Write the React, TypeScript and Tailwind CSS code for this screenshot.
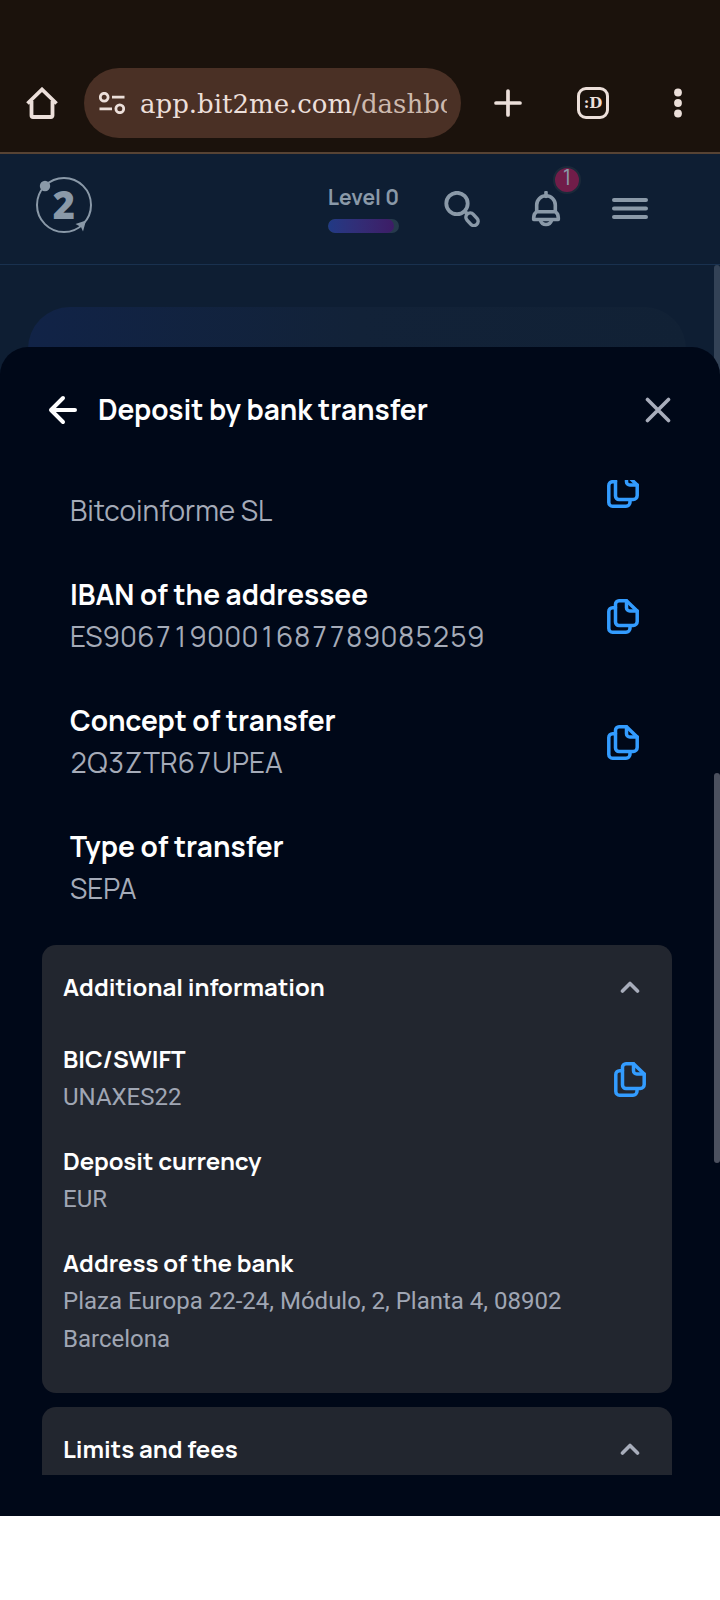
import React from "react";

type Detail = { title?: string; value: string; copy?: boolean };

const transferDetails: Detail[] = [
  { value: "Bitcoinforme SL", copy: true },
  { title: "IBAN of the addressee", value: "ES9067190001687789085259", copy: true },
  { title: "Concept of transfer", value: "2Q3ZTR67UPEA", copy: true },
  { title: "Type of transfer", value: "SEPA" },
];

const bankDetails: Detail[] = [
  { title: "BIC/SWIFT", value: "UNAXES22", copy: true },
  { title: "Deposit currency", value: "EUR" },
  { title: "Address of the bank", value: "Plaza Europa 22-24, Módulo, 2, Planta 4, 08902 Barcelona" },
];

function CopyButton({ label }: { label: string }) {
  return (
    <button type="button" aria-label={label} className="flex h-[42px] w-[42px] shrink-0 items-center justify-center text-[#339cff]">
      <svg width="32" height="35" viewBox="0 0 32 35" fill="none" stroke="currentColor" strokeWidth="3.5" strokeLinecap="round" strokeLinejoin="round">
        <path d="M12 1.8h7.5L30.2 12v10.5a4 4 0 0 1-4 4H12a3.5 3.5 0 0 1-3.500-3.500V5.300A3.500 3.500 0 0 1 12 1.800Z" />
        <path d="M19.500 1.800v7a3.300 3.300 0 0 0 3.300 3.300h7.400" />
        <path d="M8.500 8.700H5.600A3.800 3.800 0 0 0 1.800 12.500v17a3.700 3.700 0 0 0 3.700 3.700h13.500a4 4 0 0 0 4-4v-2.500" />
      </svg>
    </button>
  );
}

function BrowserBar() {
  return (
    <div className="shrink-0 border-b-2 border-[#574334] bg-[#1b120c] pt-[54px] text-[#ecdfda]">
      <div className="flex h-[98px] items-center px-[21px]">
        <button type="button" aria-label="Home" className="mr-[21px] flex h-[42px] w-[42px] shrink-0 items-center justify-center">
          <svg width="32" height="32" viewBox="0 0 32 32" fill="none" stroke="currentColor" strokeWidth="3.800" strokeLinejoin="round">
            <path d="M5.500 14v14.500a1.500 1.500 0 0 0 1.500 1.500h18a1.500 1.500 0 0 0 1.500-1.500V14" />
            <path d="M1.500 16.500 16 2.500 30.500 16.500" strokeLinejoin="miter" />
          </svg>
        </button>
        <button type="button" className="flex h-[70px] min-w-0 flex-1 items-center gap-[15px] rounded-full bg-[#4a3025] pr-[14px] pl-[15px] text-left">
          <svg className="shrink-0" width="26" height="22" viewBox="0 0 26 22" fill="none" stroke="currentColor" strokeWidth="2.800">
            <circle cx="5.200" cy="5.200" r="3.900" />
            <path d="M13 5.200h12.500M.5 16.800h12.500" />
            <circle cx="20.800" cy="16.800" r="3.900" />
          </svg>
          <span className="min-w-0 flex-1 overflow-hidden whitespace-nowrap pt-0.5 font-['Roboto_Slab','DejaVu_Serif',serif] text-[26px] leading-10">
            app.bit2me.com<span className="text-[#cdb9ae]">/dashbo</span>
          </span>
        </button>
        <div className="ml-[26px] flex shrink-0 gap-[43px]">
          <button type="button" aria-label="New tab" className="flex h-[42px] w-[42px] items-center justify-center">
            <svg width="28" height="28" viewBox="0 0 28 28" stroke="currentColor" strokeWidth="3.700" strokeLinecap="round">
              <path d="M14 2v24M2 14h24" />
            </svg>
          </button>
          <button type="button" aria-label="Open tabs" className="flex h-[42px] w-[42px] items-center justify-center">
            <span className="flex h-8 w-8 items-center justify-center rounded-[9px] border-[3px] border-[#ecdfda] font-['DejaVu_Serif',serif] text-[15px] leading-none font-bold">:D</span>
          </button>
          <button type="button" aria-label="More" className="flex h-[42px] w-[42px] items-center justify-center">
            <svg width="8" height="30" viewBox="0 0 8 30" fill="currentColor">
              <circle cx="4" cy="4.500" r="3.900" />
              <circle cx="4" cy="15" r="3.900" />
              <circle cx="4" cy="25.500" r="3.900" />
            </svg>
          </button>
        </div>
      </div>
    </div>
  );
}

function SiteHeader() {
  return (
    <header className="flex h-[111px] shrink-0 items-center justify-between border-b border-[#19314f] bg-[#0e1e33] pr-[72px] pl-[35px] text-[#8a99a8]">
      <a href="#home" aria-label="Bit2Me" className="mb-2">
        <svg width="58" height="58" viewBox="0 0 58 58">
          <circle cx="29" cy="29" r="27" fill="none" stroke="currentColor" strokeWidth="2" />
          <circle cx="10" cy="10" r="5.200" fill="currentColor" />
          <path d="M40.500 48 51 44.500 48 55.500 46 51Z" fill="currentColor" />
          <text x="29" y="43" textAnchor="middle" fill="currentColor" className="font-['Open_Sans',sans-serif] text-[38px] font-extrabold">2</text>
        </svg>
      </a>
      <div className="flex items-center gap-[45px]">
        <div className="flex flex-col gap-2 pb-[3px]">
          <span className="font-['Manrope','Inter',sans-serif] text-[21px] leading-7 font-bold whitespace-nowrap">Level 0</span>
          <div className="h-[14px] overflow-hidden rounded-full bg-[#263a4c]">
            <div className="h-full w-[93%] rounded-full bg-linear-to-r from-[#203a85] to-[#3d1c66]" />
          </div>
        </div>
        <div className="flex items-center gap-12">
          <button type="button" aria-label="Search">
            <svg width="36" height="36" viewBox="0 0 36 36" fill="none" stroke="currentColor" strokeWidth="3.800">
              <circle cx="13" cy="12.500" r="10.700" />
              <path d="m20.500 20 3 3" />
              <rect x="21" y="24" width="14" height="8.500" rx="4.250" transform="rotate(48 28 28.250)" strokeWidth="3.500" />
            </svg>
          </button>
          <button type="button" aria-label="Notifications" className="relative">
            <svg width="36" height="36" viewBox="0 0 36 36" fill="none" stroke="currentColor" strokeWidth="3.600" strokeLinejoin="round">
              <path d="M18 1.500v4" strokeLinecap="round" />
              <path d="M8.700 20.500v-6.500a9.300 9.300 0 0 1 18.600 0v6.500" />
              <path d="M8.700 20.700h18.600c2 1.300 3 3.300 3 6v1.800h-24.600v-1.800c0-2.700 1-4.700 3-6Z" />
              <path d="M12.500 29.500c1 3.200 3 4 5.500 4s4.500-.8 5.500-4" />
            </svg>
            <span className="absolute -top-[25px] left-[25px] flex h-7 w-7 justify-center rounded-full border-2 border-[#1b2a3a] bg-[#711d49] font-['Manrope','Inter',sans-serif] text-[22px] leading-[18px] font-normal">1</span>
          </button>
          <button type="button" aria-label="Menu">
            <svg width="36" height="36" viewBox="0 0 36 36" stroke="currentColor" strokeWidth="4" strokeLinecap="round">
              <path d="M2 9h32M2 17.500h32M2 26h32" />
            </svg>
          </button>
        </div>
      </div>
    </header>
  );
}

function PanelHeader({ title, open }: { title: string; open: boolean }) {
  return (
    <button type="button" aria-expanded={open} className="flex h-[84px] w-full items-center justify-between text-left">
      <span className="text-[24px] leading-9 font-bold text-white">{title}</span>
      <span className="flex h-[42px] w-[42px] items-center justify-center text-[#a8adbb]">
        <svg width="20" height="12" viewBox="0 0 20 12" fill="none" stroke="currentColor" strokeWidth="3.600" strokeLinecap="round" strokeLinejoin="round">
          <path d="m2.500 10 7.500-7.500 7.500 7.500" />
        </svg>
      </span>
    </button>
  );
}

function DepositSheet() {
  return (
    <section aria-labelledby="sheet-title" className="relative -mt-7 flex min-h-0 flex-1 flex-col rounded-t-[28px] bg-[#000818] pb-[41px] font-['Manrope','Inter',sans-serif]">
      <div className="mb-[7px] flex h-[126px] shrink-0 items-center gap-[14px] pr-12 pl-[42px]">
        <button type="button" aria-label="Back" className="flex h-[42px] w-[42px] items-center justify-center text-white">
          <svg width="30" height="30" viewBox="0 0 30 30" fill="none" stroke="currentColor" strokeWidth="4" strokeLinecap="round" strokeLinejoin="round">
            <path d="M27 15H3M15 3 3 15l12 12" />
          </svg>
        </button>
        <h1 id="sheet-title" className="flex-1 pb-0.5 text-[28px] leading-[42px] font-bold text-white">Deposit by bank transfer</h1>
        <button type="button" aria-label="Close" className="flex h-7 w-7 items-center justify-center text-[#a8adbb]">
          <svg width="26" height="26" viewBox="0 0 26 26" stroke="currentColor" strokeWidth="3.600" strokeLinecap="round">
            <path d="m2.500 2.500 21 21M23.500 2.500l-21 21" />
          </svg>
        </button>
      </div>

      <div className="min-h-0 flex-1 overflow-hidden">
        <div className="-mt-[53px] mb-[14px] pr-[76px] pl-[70px]">
          {transferDetails.map((d) => (
            <div key={d.value} className="flex h-[126px] items-center justify-between py-5">
              <div className="flex h-[84px] flex-col justify-end self-start">
                {d.title && <h2 className="text-[28px] leading-[42px] font-bold text-white">{d.title}</h2>}
                <p className="text-[28px] leading-[42px] font-normal text-[#a5abb8] tabular-nums">{d.value}</p>
              </div>
              {d.copy && <CopyButton label={"Copy " + d.value} />}
            </div>
          ))}
        </div>

        <div className="mr-12 ml-[42px] flex flex-col gap-[14px]">
          <div className="rounded-[14px] bg-[#22262f] px-[21px] pb-[35px]">
            <PanelHeader title="Additional information" open />
            <div className="flex flex-col gap-[29px] pt-[14px]">
              {bankDetails.map((d) => (
                <div key={d.value} className="flex items-center justify-between">
                  <div className="flex flex-col gap-[3px]">
                    <h3 className="text-[24px] leading-8 font-bold text-white">{d.title}</h3>
                    <p className="font-['Roboto',sans-serif] text-[24px] leading-[38px] text-[#a0a6b4]">{d.value}</p>
                  </div>
                  {d.copy && <CopyButton label={"Copy " + d.value} />}
                </div>
              ))}
            </div>
          </div>
          <div className="rounded-[14px] bg-[#22262f] px-[21px] pb-[35px]">
            <PanelHeader title="Limits and fees" open />
          </div>
        </div>
      </div>

      <div className="absolute top-[426px] right-0 h-[390px] w-[6px] rounded-[3px] bg-[#4b505e]" />
    </section>
  );
}

export default function App() {
  return (
    <div className="flex h-screen flex-col overflow-hidden bg-white pb-[84px]">
      <BrowserBar />
      <SiteHeader />
      <main className="flex min-h-0 flex-1 flex-col bg-[#0e1e33]">
        <div className="relative shrink-0 pt-[42px] pr-[34px] pl-7">
          <div className="h-[68px] rounded-t-[42px] bg-linear-to-r from-[#112347] via-[#122238] via-50% to-[#112135]" />
          <div className="absolute top-0 right-0 h-full w-[6px] rounded-t-[3px] bg-[#334256]" />
        </div>
        <DepositSheet />
      </main>
    </div>
  );
}
